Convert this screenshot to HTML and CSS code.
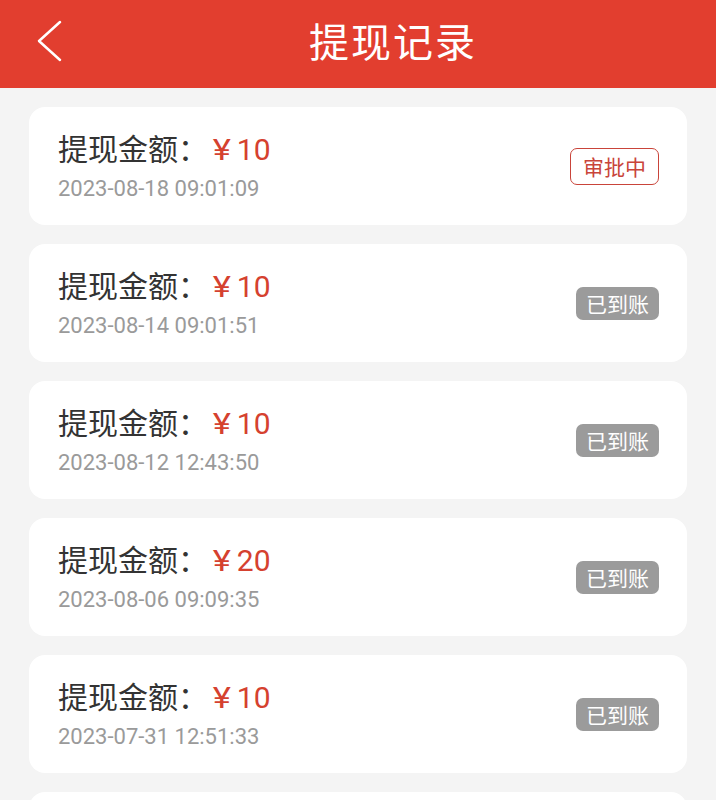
FILE: index.html
```html
<!DOCTYPE html>
<html lang="zh-CN">
<head>
    <meta charset="UTF-8">
    <meta name="viewport" content="width=device-width, initial-scale=1.0">
    <title>提现记录</title>
    <link rel="stylesheet" href="styles.css">
</head>
<body>
    <div class="header">
        <div class="back">
            <svg width="30" height="44" viewBox="0 0 30 44">
                <polyline points="25,3 4,22 25,41" fill="none" stroke="#fff" stroke-width="2.5" stroke-linecap="round" stroke-linejoin="round"/>
            </svg>
        </div>
        <div class="title">提现记录</div>
    </div>

    <div class="list" id="list"></div>

    <script>
        let records = [
            { amount: 10, time: "2023-08-18 09:01:09", status: "pending" },
            { amount: 10, time: "2023-08-14 09:01:51", status: "done" },
            { amount: 10, time: "2023-08-12 12:43:50", status: "done" },
            { amount: 20, time: "2023-08-06 09:09:35", status: "done" },
            { amount: 10, time: "2023-07-31 12:51:33", status: "done" }
        ];

        let list = document.getElementById("list");
        records.forEach(r => {
            let badge = r.status === "pending"
                ? '<span class="badge pending">审批中</span>'
                : '<span class="badge done">已到账</span>';
            list.innerHTML +=
                '<div class="card">' +
                    '<div class="info">' +
                        '<div class="amount">提现金额：<span class="money"><span class="yen">¥</span>' + r.amount + '</span></div>' +
                        '<div class="time">' + r.time + '</div>' +
                    '</div>' +
                    badge +
                '</div>';
        });
        list.innerHTML += '<div class="card"></div>';
    </script>
</body>
</html>
```

FILE: styles.css
```css
body {
    margin: 0;
    background-color: #f4f4f4;
    font-family: Roboto, "Noto Sans CJK SC", sans-serif;
    overflow: hidden;
}
.header {
    height: 88px;
    background-color: #e23e2f;
    display: flex;
    align-items: center;
    color: #fff;
}
.back {
    width: 70px;
    padding-left: 35px;
    box-sizing: border-box;
    display: flex;
    align-items: center;
    margin-top: -6px;
}
.title {
    flex: 1;
    text-align: center;
    font-size: 40px;
    letter-spacing: 2px;
    font-family: "Noto Sans CJK SC", sans-serif;
    margin-top: -8px;
}
.list {
    padding: 19px 29px;
}
.card {
    height: 118px;
    background-color: #fff;
    border-radius: 16px;
    margin-bottom: 19px;
    padding: 0 28px 0 29px;
    display: flex;
    align-items: center;
    justify-content: space-between;
}
.amount {
    font-size: 30px;
    line-height: 36px;
    color: #333;
    font-family: "Noto Sans CJK SC", sans-serif;
}
.money {
    color: #d5412f;
    margin-left: 6px;
    font-family: Roboto, "Noto Sans CJK SC", sans-serif;
}
.yen {
    display: inline-block;
    transform: scaleX(1.15);
    margin-right: 7px;
}
.time {
    margin-top: 6px;
    font-size: 22px;
    line-height: 30px;
    color: #9a9a9a;
}
.badge {
    font-size: 21px;
    line-height: 29px;
    font-family: "Noto Sans CJK SC", sans-serif;
    border-radius: 7px;
}
.pending {
    color: #c9443a;
    border: 1px solid #c9443a;
    padding: 3px 12px;
}
.done {
    color: #fff;
    background-color: #9b9b9b;
    padding: 2px 10px;
}
```
